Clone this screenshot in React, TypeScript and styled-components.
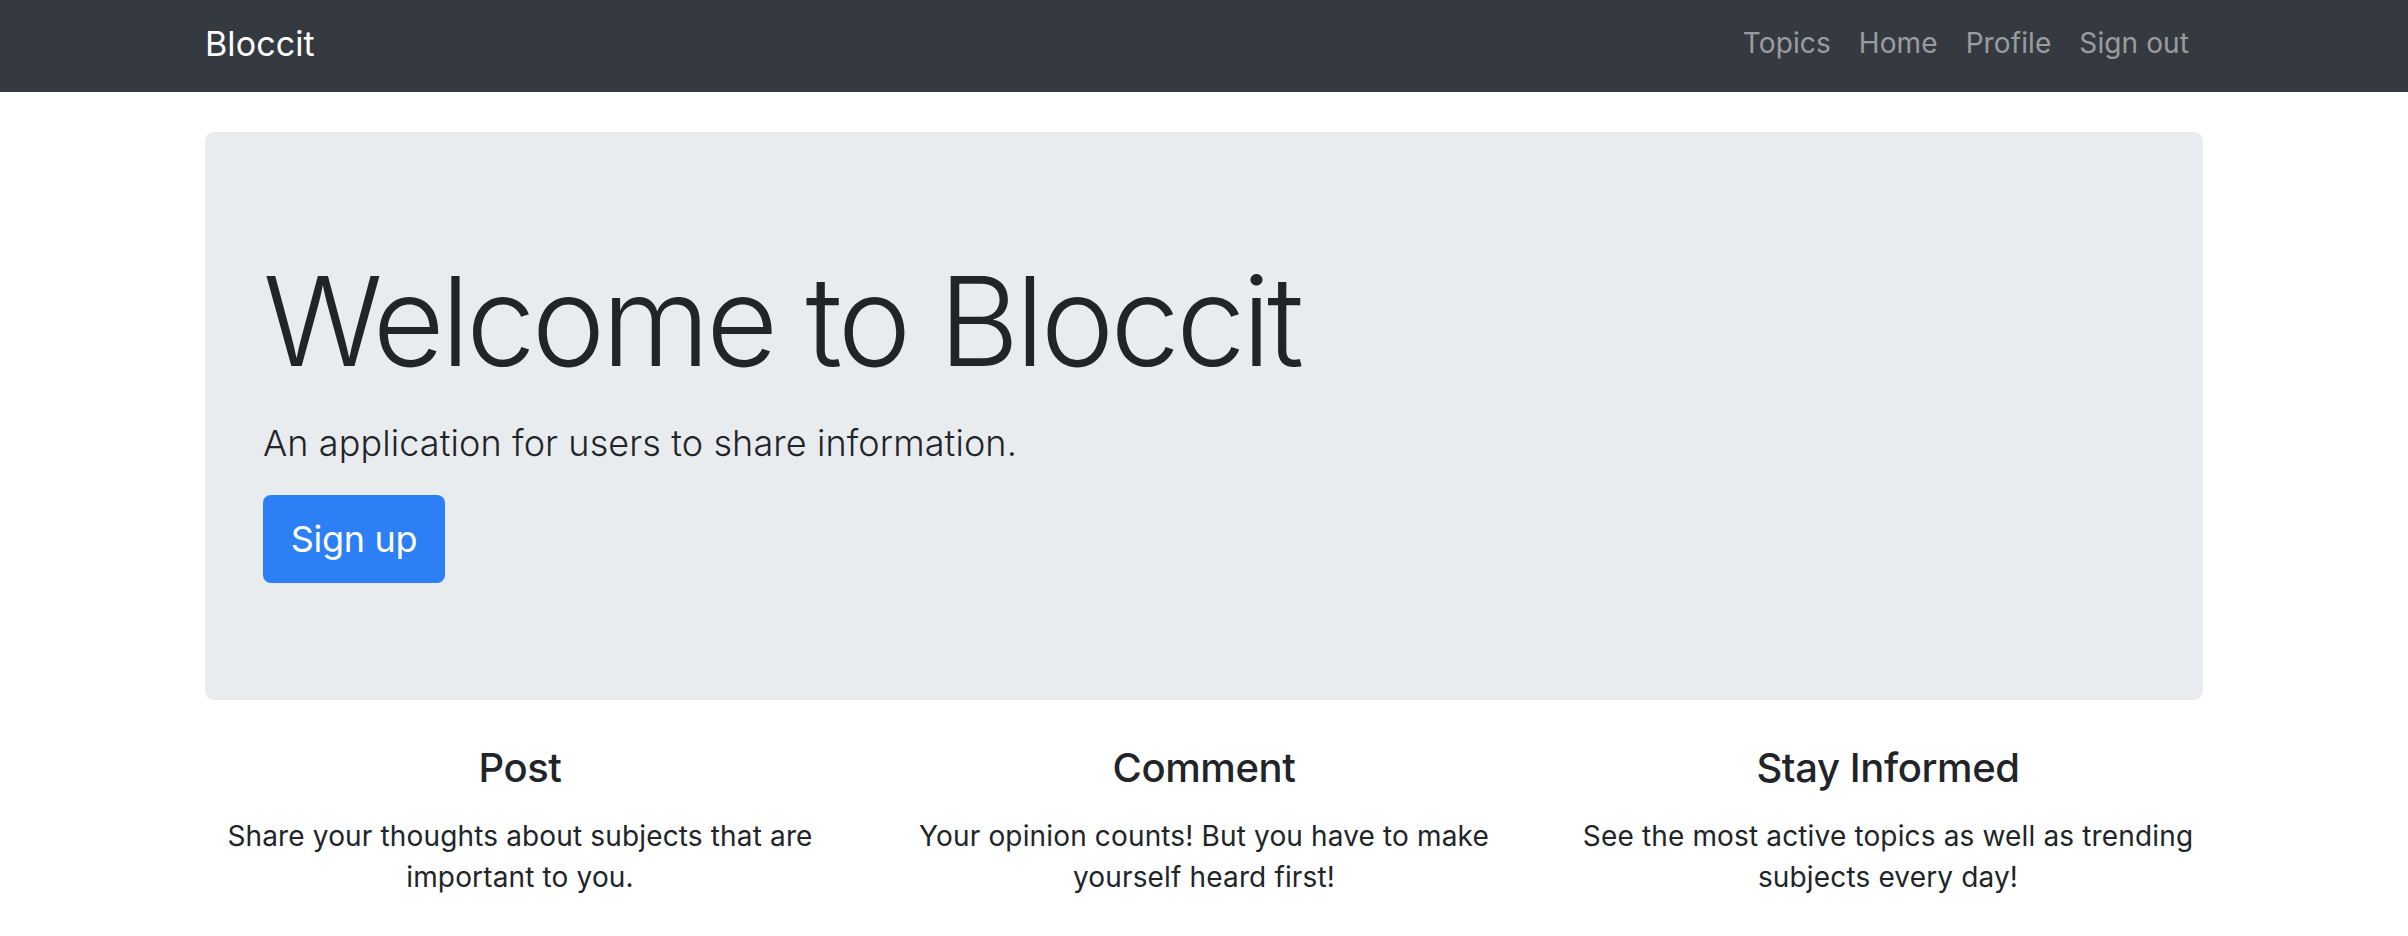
import React from 'react';
import styled, { createGlobalStyle } from 'styled-components';

const GlobalStyle = createGlobalStyle`
  html, body {
    margin: 0;
    padding: 0;
    background: #ffffff;
  }
  body {
    font-family: Inter, "Noto Sans", "Liberation Sans", sans-serif;
    color: #212529;
    -webkit-font-smoothing: antialiased;
  }
  * {
    box-sizing: border-box;
  }
`;

const NAV_LINKS = ['Topics', 'Home', 'Profile', 'Sign out'];

const FEATURES = [
  {
    title: 'Post',
    text: 'Share your thoughts about subjects that are important to you.',
  },
  {
    title: 'Comment',
    text: 'Your opinion counts! But you have to make yourself heard first!',
  },
  {
    title: 'Stay Informed',
    text: 'See the most active topics as well as trending subjects every day!',
  },
];

const Navbar = styled.nav`
  height: 92px;
  background: #343a40;
`;

const Container = styled.div`
  width: 2052px;
  margin: 0 auto;
  padding: 0 27px;
`;

const NavInner = styled(Container)`
  height: 100%;
  display: flex;
  align-items: center;
  justify-content: space-between;
`;

const Brand = styled.a`
  color: #ffffff;
  font-size: 34px;
  font-weight: 400;
  text-decoration: none;
  letter-spacing: 0.1px;
  margin-top: -6px;
`;

const NavList = styled.ul`
  display: flex;
  list-style: none;
  margin: -6px 0 0;
  padding: 0;
`;

const NavLink = styled.a`
  display: block;
  padding: 0 14px;
  color: rgba(255, 255, 255, 0.5);
  font-size: 28px;
  text-decoration: none;
  letter-spacing: 0.1px;
`;

const Jumbotron = styled.section`
  margin-top: 40px;
  height: 568px;
  padding: 115px 58px;
  background: #e9ecef;
  border-radius: 9px;
`;

const Display = styled.h1`
  margin: 0 0 20px;
  font-size: 124px;
  font-weight: 300;
  line-height: 1.2;
  letter-spacing: -3.7px;
`;

const Lead = styled.p`
  margin: 0 0 25px;
  font-size: 36px;
  font-weight: 300;
  line-height: 1.5;
  letter-spacing: 0.1px;
`;

const PrimaryButton = styled.a`
  display: inline-flex;
  align-items: center;
  justify-content: center;
  width: 182px;
  height: 88px;
  background: #2d7ff6;
  color: #ffffff;
  border-radius: 8px;
  font-size: 36px;
  text-decoration: none;
  letter-spacing: -0.3px;
`;

const FeatureRow = styled.div`
  display: grid;
  grid-template-columns: repeat(3, 1fr);
  margin: 44px -27px 0;
`;

const Feature = styled.div`
  padding: 0 27px;
  text-align: center;
`;

const FeatureTitle = styled.h4`
  margin: 0 0 24px;
  font-size: 40px;
  font-weight: 500;
  line-height: 1.2;
  letter-spacing: -0.4px;
`;

const FeatureText = styled.p`
  margin: 0;
  font-size: 28px;
  line-height: 41px;
  letter-spacing: 0.15px;
`;

export default function App() {
  return (
    <>
      <GlobalStyle />
      <Navbar>
        <NavInner>
          <Brand href="#">Bloccit</Brand>
          <NavList>
            {NAV_LINKS.map((link) => (
              <li key={link}>
                <NavLink href="#">{link}</NavLink>
              </li>
            ))}
          </NavList>
        </NavInner>
      </Navbar>
      <Container>
        <Jumbotron>
          <Display>Welcome to Bloccit</Display>
          <Lead>An application for users to share information.</Lead>
          <PrimaryButton href="#">Sign up</PrimaryButton>
        </Jumbotron>
        <FeatureRow>
          {FEATURES.map((f) => (
            <Feature key={f.title}>
              <FeatureTitle>{f.title}</FeatureTitle>
              <FeatureText>{f.text}</FeatureText>
            </Feature>
          ))}
        </FeatureRow>
      </Container>
    </>
  );
}
